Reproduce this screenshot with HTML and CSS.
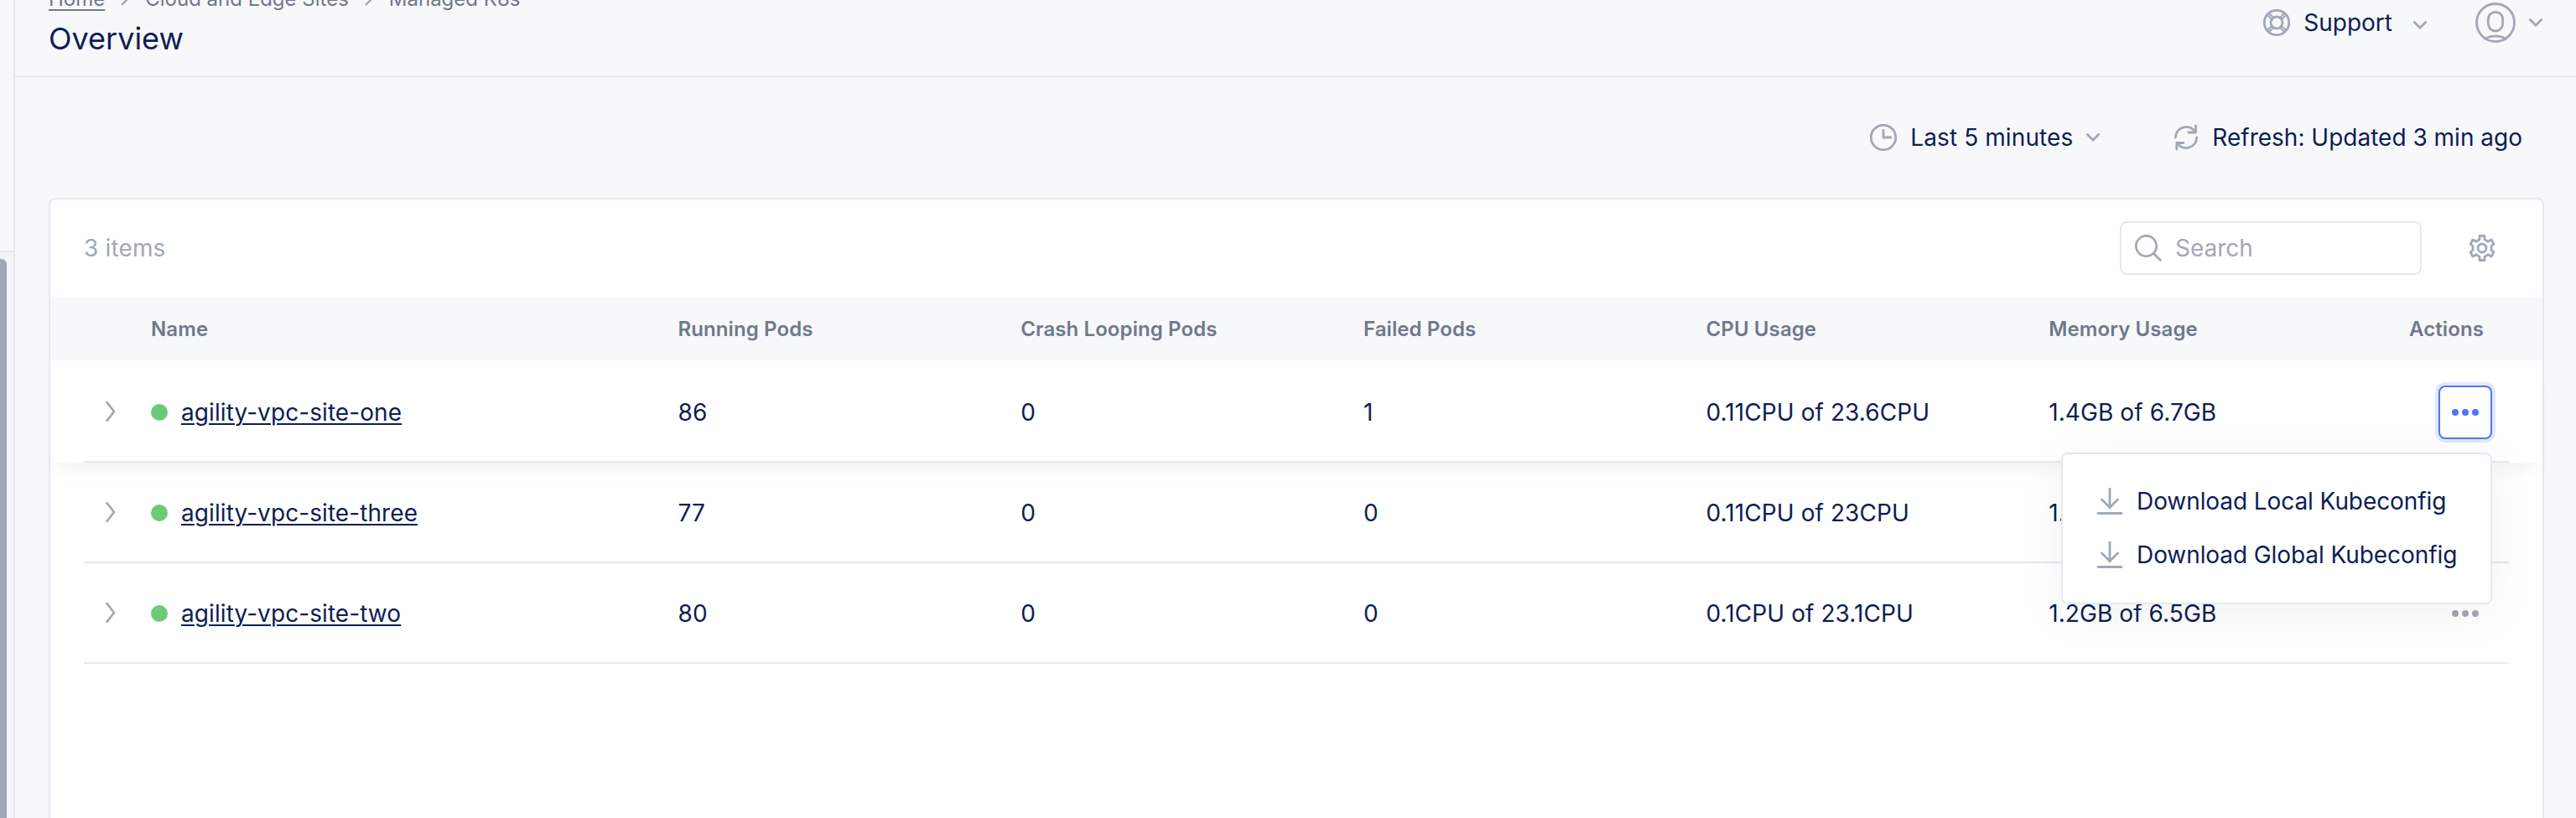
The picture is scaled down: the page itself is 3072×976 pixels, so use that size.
FILE: index.html
```html
<!DOCTYPE html>
<html lang="en">
<head>
<meta charset="utf-8">
<title>Overview</title>
<link rel="stylesheet" href="styles.css">
</head>
<body>
<div class="app">
  <aside class="rail"><div class="rail-top"></div><div class="rail-scroll"><div class="thumb"></div></div></aside>
  <main class="main">
    <header class="header">
      <div class="heading">
        <nav class="crumbs"><a class="crumb-home">Home</a><svg class="sep" viewBox="0 0 10 18"><path d="M1 2l7 7-7 7"/></svg><span>Cloud and Edge Sites</span><svg class="sep" viewBox="0 0 10 18"><path d="M1 2l7 7-7 7"/></svg><span>Managed K8s</span></nav>
        <h1 class="title">Overview</h1>
      </div>
      <div class="tools">
        <svg class="ic i32" viewBox="0 0 32 32"><circle cx="16" cy="16" r="14.700"/><circle cx="16" cy="16" r="7"/><path d="M7 5l5.300 5.300M5 7l5.300 5.300M25 5l-5.300 5.300M27 7l-5.300 5.300M7 27l5.300-5.300M5 25l5.300-5.300M25 27l-5.300-5.300M27 25l-5.300-5.300" stroke-width="2"/></svg>
        <span class="support">Support</span>
        <svg class="ic chev low" viewBox="0 0 16 10"><path d="M1.300 1.500L8 8.200l6.700-6.700"/></svg>
        <svg class="ic avatar" viewBox="0 0 48 48"><circle cx="24" cy="24" r="22.500"/><rect x="15.300" y="11.300" width="17.400" height="22.700" rx="8.700"/><path d="M12 43.500c4.500-4.600 19.500-4.600 24 0"/></svg>
        <svg class="ic chev" viewBox="0 0 16 10"><path d="M1.300 1.500L8 8.200l6.700-6.700"/></svg>
      </div>
    </header>
    <div class="controls">
      <svg class="ic i32 clock" viewBox="0 0 32 32"><circle cx="16" cy="16" r="14.700"/><path d="M16 7.500V16h9"/></svg>
      <span class="range">Last 5 minutes</span>
      <svg class="ic chev" viewBox="0 0 16 10"><path d="M1.300 1.500L8 8.200l6.700-6.700"/></svg>
      <svg class="ic i32 refresh" viewBox="0 0 32 32"><path d="M3.300 16C4 3.500 19-1 26.500 9M27.500 2v8H19M28.700 16C28 28.500 13 33 5.500 23M4.800 30v-7.500h8"/></svg>
      <span class="updated">Refresh: Updated 3 min ago</span>
    </div>
    <section class="card">
      <div class="bar">
        <span class="count">3 items</span>
        <div class="search"><svg class="ic i32" viewBox="0 0 32 32"><circle cx="13.500" cy="13.500" r="12.200"/><path d="M22.500 22.500l8 8"/></svg><span>Search</span></div>
        <svg class="ic i32 gear" viewBox="0 0 32 32"><path d="M13 1.500h6v4.300l4.200 2.400L27 6l3 5.200-3 2.300v5l3 2.300-3 5.200-3.800-2.200-4.200 2.400v4.300h-6v-4.300l-4.200-2.400L5 26l-3-5.200 3-2.300v-5l-3-2.300L5 6l3.800 2.200L13 5.800z"/><circle cx="16" cy="16" r="5"/></svg>
      </div>
      <div class="grid thead"><span></span><span>Name</span><span>Running Pods</span><span>Crash Looping Pods</span><span>Failed Pods</span><span>CPU Usage</span><span>Memory Usage</span><span class="act">Actions</span></div>
      <div class="row raised"><div class="grid">
        <svg class="ic exp" viewBox="0 0 12 24"><path d="M1.500 1l8.500 11-8.500 11"/></svg>
        <span class="name"><i class="dot"></i><a>agility-vpc-site-one</a></span><span>86</span><span>0</span><span>1</span><span>0.11CPU of 23.6CPU</span><span>1.4GB of 6.7GB</span>
        <span class="menu-cell"><button class="more open"><i></i><i></i><i></i></button>
          <div class="menu">
            <div class="item"><svg class="ic i32" viewBox="0 0 32 32"><path d="M16 1v23M6.500 14L16 23.500l9.500-9.500M2 30.500h28"/></svg><span>Download Local Kubeconfig</span></div>
            <div class="item"><svg class="ic i32" viewBox="0 0 32 32"><path d="M16 1v23M6.500 14L16 23.500l9.500-9.500M2 30.500h28"/></svg><span>Download Global Kubeconfig</span></div>
          </div>
        </span>
      </div></div>
      <div class="row"><div class="grid">
        <svg class="ic exp" viewBox="0 0 12 24"><path d="M1.500 1l8.500 11-8.500 11"/></svg>
        <span class="name"><i class="dot"></i><a>agility-vpc-site-three</a></span><span>77</span><span>0</span><span>0</span><span>0.11CPU of 23CPU</span><span>1.</span>
        <span class="menu-cell"><button class="more"><i></i><i></i><i></i></button></span>
      </div></div>
      <div class="row"><div class="grid">
        <svg class="ic exp" viewBox="0 0 12 24"><path d="M1.500 1l8.500 11-8.500 11"/></svg>
        <span class="name"><i class="dot"></i><a>agility-vpc-site-two</a></span><span>80</span><span>0</span><span>0</span><span>0.1CPU of 23.1CPU</span><span>1.2GB of 6.5GB</span>
        <span class="menu-cell"><button class="more"><i></i><i></i><i></i></button></span>
      </div></div>
    </section>
  </main>
</div>
</body>
</html>
```
FILE: styles.css
```css
* { box-sizing: border-box; }
body { margin: 0; background: #f7f8fa; font-family: Inter, sans-serif; font-size: 28px; line-height: 34px; color: #0e1d55; overflow: hidden; }
.app { display: flex; height: 976px; overflow: hidden; }
.rail { width: 18px; border-right: 2px solid #e5e8f1; display: flex; flex-direction: column; flex: none; }
.rail-top { height: 301px; border-bottom: 2px solid #e5e8f1; }
.rail-scroll { flex: 1; background: #f3f4f9; padding-top: 8px; }
.thumb { width: 8px; height: 100%; background: #a0a7b8; border-radius: 0 6px 0 0; }
.main { flex: 1; min-width: 0; display: flex; flex-direction: column; }
.header { height: 92px; flex: none; border-bottom: 2px solid #e5e8f1; display: flex; justify-content: space-between; padding: 0 40px 0 40px; }
.crumbs { display: flex; align-items: center; height: 30px; margin-top: -16px; font-size: 24px; line-height: 30px; color: #6f788c; }
.crumb-home { text-decoration: underline; text-decoration-thickness: 2px; text-underline-offset: 4px; text-decoration-skip-ink: none; }
.sep { width: 10px; height: 18px; margin: 0 19px 0 19px; fill: none; stroke: #a0a8b9; stroke-width: 2.400; }
.title { margin: 10px 0 0; font-size: 36px; line-height: 44px; font-weight: 400; }
.ic { fill: none; stroke: #a0a8b9; stroke-width: 2.800; stroke-linecap: round; stroke-linejoin: round; flex: none; }
.i32 { width: 32px; height: 32px; }
.chev { width: 16px; height: 10px; }
.low { margin-top: 5px; }
.tools { display: flex; align-items: center; height: 54px; }
.support { margin: 0 25px 0 16px; }
.avatar { width: 48px; height: 48px; margin: 0 16px 0 58px; }
.controls { display: flex; align-items: center; justify-content: flex-end; height: 144px; padding-right: 64px; flex: none; }
.range { margin: 0 16px; letter-spacing: .1px; }
.refresh { margin: 0 15px 0 87px; }
.card { flex: 1; margin: 0 38px 0 40px; background: #fff; border: 2px solid #e5e8f1; border-bottom: 0; border-radius: 8px 8px 0 0; }
.bar { height: 116px; display: flex; align-items: center; padding: 0 56px 0 40px; }
.count { margin-right: auto; color: #a0a8b9; letter-spacing: .15px; }
.search { width: 360px; height: 64px; border: 2px solid #e5e8f1; border-radius: 8px; display: flex; align-items: center; gap: 16px; padding-left: 16px; color: #a0a8b9; }
.gear { margin-left: 56px; }
.grid { display: grid; grid-template-columns: 80px 628.500px 408.700px 408.700px 408.700px 408.700px 400px 1fr; align-items: center; }
.thead { height: 76px; background: #f7f8fa; padding: 1px 40px 0; font-size: 24px; font-weight: 600; color: #6f788c; letter-spacing: .1px; }
.act { justify-self: end; margin-right: 30px; }
.row { height: 120px; padding: 0 40px; }
.row .grid { height: 100%; border-bottom: 2px solid #e5e8f1; padding-top: 2px; letter-spacing: .08px; }
.raised { height: 122px; position: relative; z-index: 1; background: #fff; box-shadow: 0 16px 20px -8px rgba(0,0,0,.05); }
.raised .grid { padding-top: 4px; }
.exp { width: 12px; height: 24px; margin: 0 0 2px 26px; }
.name { display: flex; align-items: center; gap: 16px; }
.dot { width: 20px; height: 20px; border-radius: 50%; background: #6bcb74; }
.name a { text-decoration: underline; text-decoration-thickness: 2px; text-underline-offset: 3px; }
.menu-cell { justify-self: end; margin-right: 20px; position: relative; }
.more { display: flex; width: 64px; height: 64px; padding: 0; align-items: center; justify-content: center; gap: 4px; background: transparent; border: 2px solid transparent; border-radius: 8px; }
.more i { width: 8px; height: 8px; border-radius: 50%; background: #a0a7b8; }
.open { border-color: #5175f6; box-shadow: 0 0 0 4px #e2e8fd; }
.open i { background: #5175f6; }
.menu { position: absolute; right: 0; top: 80px; width: 514px; height: 181px; background: #fff; border: 2px solid #e5e8f1; border-radius: 8px; padding: 24px 40px; box-shadow: 0 10px 60px rgba(0,0,0,.06); letter-spacing: -.08px; }
.item { height: 64px; display: flex; align-items: center; gap: 16px; white-space: nowrap; }
```
